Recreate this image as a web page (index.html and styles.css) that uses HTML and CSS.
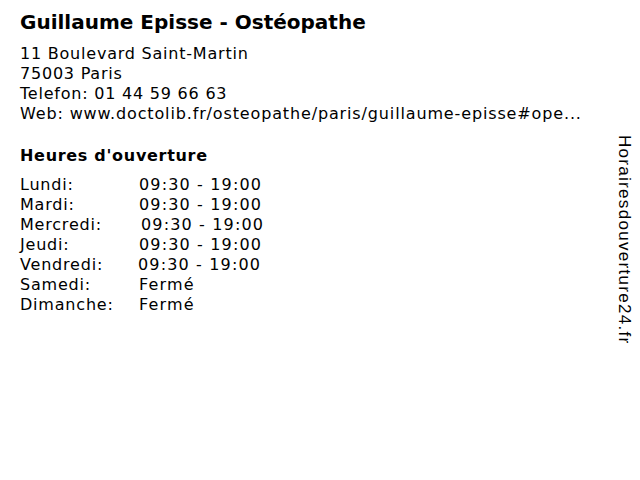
FILE: index.html
```html
<!DOCTYPE html>
<html lang="fr">
<head>
<meta charset="utf-8">
<title>Guillaume Episse - Ostéopathe</title>
<link rel="stylesheet" href="styles.css">
</head>
<body>
<div class="page">
  <h1 class="title">Guillaume Episse - Ostéopathe</h1>
  <div class="address">
    <div>11 Boulevard Saint-Martin</div>
    <div>75003 Paris</div>
    <div>Telefon: 01 44 59 66 63</div>
    <div class="web">Web: www.doctolib.fr/osteopathe/paris/guillaume-episse#ope...</div>
  </div>
  <h2 class="subtitle">Heures d'ouverture</h2>
  <div class="hours">
    <span>Lundi:</span><span class="time">09:30 - 19:00</span>
    <span>Mardi:</span><span class="time">09:30 - 19:00</span>
    <span>Mercredi:</span><span class="time shift-r">09:30 - 19:00</span>
    <span>Jeudi:</span><span class="time">09:30 - 19:00</span>
    <span>Vendredi:</span><span class="time shift-l">09:30 - 19:00</span>
    <span>Samedi:</span><span class="time">Fermé</span>
    <span>Dimanche:</span><span class="time">Fermé</span>
  </div>
</div>
<div class="side">Horairesdouverture24.fr</div>
</body>
</html>
```
FILE: styles.css
```css
html, body {
  margin: 0;
  padding: 0;
  background: #fff;
}
body {
  width: 640px;
  height: 480px;
  position: relative;
  overflow: hidden;
  font-family: "DejaVu Sans", Verdana, sans-serif;
  color: #000;
}
.page {
  padding: 9px 20px 0 20px;
}
.title {
  margin: 0;
  font-size: 20px;
  font-weight: bold;
  line-height: 26px;
}
.address {
  margin-top: 9px;
  font-size: 16px;
  line-height: 20px;
  letter-spacing: 0.78px;
}
.address .web {
  letter-spacing: 0.86px;
}
.subtitle {
  margin: 22px 0 0 0;
  font-size: 16px;
  font-weight: bold;
  line-height: 20px;
  letter-spacing: 0.7px;
}
.hours {
  margin-top: 9px;
  display: grid;
  grid-template-columns: 119px auto;
  font-size: 16px;
  line-height: 20px;
  letter-spacing: 0.8px;
}
.hours .time {
  letter-spacing: 1.15px;
}
.shift-r { margin-left: 2px; }
.shift-l { margin-left: -1px; }
.side {
  position: absolute;
  top: 135px;
  left: 614px;
  writing-mode: vertical-rl;
  font-family: "Liberation Sans", Arial, sans-serif;
  font-size: 17px;
  line-height: 20px;
  letter-spacing: 1.3px;
  color: #000;
}
```
